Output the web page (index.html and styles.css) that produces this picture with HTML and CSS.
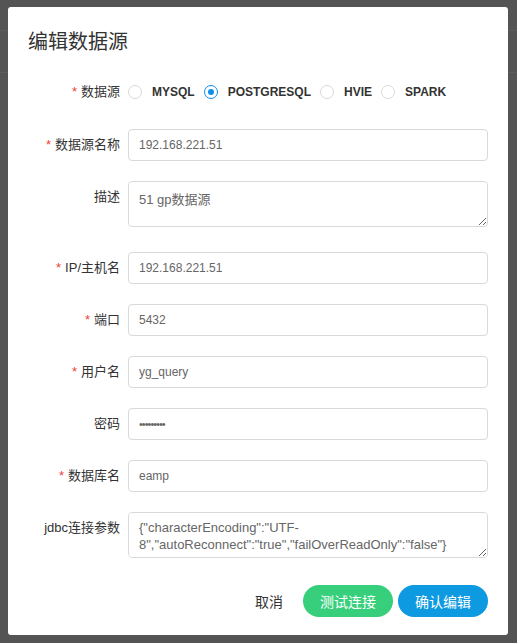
FILE: index.html
```html
<!DOCTYPE html>
<html lang="zh">
<head>
<meta charset="utf-8">
<title>编辑数据源</title>
<link rel="stylesheet" href="styles.css">
</head>
<body>
<div class="modal">
  <h2 class="title">编辑数据源</h2>
  <form class="form">
    <div class="row">
      <label class="lbl req">数据源</label>
      <div class="ctrl radios">
        <label class="radio"><span class="dot"></span><span class="rtext">MYSQL</span></label>
        <label class="radio checked"><span class="dot"></span><span class="rtext">POSTGRESQL</span></label>
        <label class="radio"><span class="dot"></span><span class="rtext">HVIE</span></label>
        <label class="radio"><span class="dot"></span><span class="rtext">SPARK</span></label>
      </div>
    </div>
    <div class="row">
      <label class="lbl req">数据源名称</label>
      <div class="ctrl"><input class="inp" type="text" value="192.168.221.51"></div>
    </div>
    <div class="row row-ta">
      <label class="lbl">描述</label>
      <div class="ctrl"><textarea class="ta ta-desc">51 gp数据源</textarea></div>
    </div>
    <div class="row">
      <label class="lbl req">IP/主机名</label>
      <div class="ctrl"><input class="inp" type="text" value="192.168.221.51"></div>
    </div>
    <div class="row">
      <label class="lbl req">端口</label>
      <div class="ctrl"><input class="inp" type="text" value="5432"></div>
    </div>
    <div class="row">
      <label class="lbl req">用户名</label>
      <div class="ctrl"><input class="inp" type="text" value="yg_query"></div>
    </div>
    <div class="row">
      <label class="lbl">密码</label>
      <div class="ctrl"><input class="inp pwd" type="password" value="123456789"></div>
    </div>
    <div class="row">
      <label class="lbl req">数据库名</label>
      <div class="ctrl"><input class="inp" type="text" value="eamp"></div>
    </div>
    <div class="row row-last">
      <label class="lbl">jdbc连接参数</label>
      <div class="ctrl"><textarea class="ta">{"characterEncoding":"UTF-8","autoReconnect":"true","failOverReadOnly":"false"}</textarea></div>
    </div>
  </form>
  <div class="footer">
    <button class="btn btn-text" type="button">取消</button>
    <button class="btn btn-green" type="button">测试连接</button>
    <button class="btn btn-blue" type="button">确认编辑</button>
  </div>
</div>
</body>
</html>
```
FILE: styles.css
```css
html, body {
  margin: 0;
  padding: 0;
}
body {
  background-color: #545454;
  background-image:
    linear-gradient(#5c5c5c, #5c5c5c),
    linear-gradient(#5c5c5c, #5c5c5c);
  background-repeat: no-repeat;
  background-size: 100% 1px, 100% 1px;
  background-position: 0 30px, 0 72px;
  width: 517px;
  height: 643px;
  font-family: "Liberation Sans", "Noto Sans CJK SC", sans-serif;
  color: #333;
  overflow: hidden;
}
.modal {
  box-sizing: border-box;
  width: 500px;
  height: 628px;
  margin: 7px 0 0 8px;
  background: #fff;
  border-radius: 3px;
  padding: 20px 20px 0 20px;
}
.title {
  margin: 0;
  font-size: 20px;
  line-height: 28px;
  font-weight: normal;
  color: #333;
  font-family: "Noto Sans CJK SC", sans-serif;
}
.form {
  margin-top: 21px;
}
.row {
  display: flex;
  align-items: flex-start;
  margin-bottom: 20px;
}
.row:first-child {
  margin-bottom: 21px;
}
.row-ta {
  margin-bottom: 25px;
}
.row-last {
  margin-bottom: 0;
}
.lbl {
  box-sizing: border-box;
  width: 100px;
  flex: none;
  padding-right: 8px;
  text-align: right;
  font-size: 13px;
  line-height: 32px;
  color: #333;
  white-space: nowrap;
}
.req::before {
  content: "*";
  color: #f04134;
  margin-right: 4px;
  font-family: "Liberation Sans", sans-serif;
}
.ctrl {
  flex: 1;
  min-width: 0;
}
.inp, .ta {
  box-sizing: border-box;
  display: block;
  width: 100%;
  border: 1px solid #d9d9d9;
  border-radius: 4px;
  background: #fff;
  color: #666;
  font-family: "Liberation Sans", "Noto Sans CJK SC", sans-serif;
  outline: none;
  margin: 0;
}
.inp {
  height: 32px;
  padding: 0 10px;
  font-size: 12px;
}
.pwd {
  letter-spacing: -1px;
  font-size: 11px;
}
.ta {
  height: 46px;
  padding: 6px 10px;
  font-size: 13px;
  line-height: 17px;
  resize: vertical;
}
.ta-desc {
  padding-top: 9px;
}
.radios {
  display: flex;
  align-items: center;
  height: 32px;
}
.radio {
  display: flex;
  align-items: center;
  margin-right: 9px;
}
.dot {
  box-sizing: border-box;
  width: 14px;
  height: 14px;
  border: 1px solid #d9d9d9;
  border-radius: 50%;
  background: #fff;
  position: relative;
  flex: none;
}
.checked .dot {
  border-color: #108ee9;
}
.checked .dot::after {
  content: "";
  position: absolute;
  left: 3px;
  top: 3px;
  width: 6px;
  height: 6px;
  border-radius: 50%;
  background: #108ee9;
}
.rtext {
  margin-left: 10px;
  font-size: 12px;
  font-weight: bold;
  color: #333;
}
.footer {
  display: flex;
  justify-content: flex-end;
  gap: 5px;
  margin-top: 27px;
}
.btn {
  height: 32px;
  border: none;
  border-radius: 16px;
  padding: 0 17px;
  font-size: 14px;
  font-family: "Noto Sans CJK SC", sans-serif;
  cursor: pointer;
  line-height: 32px;
}
.btn-text {
  background: transparent;
  color: #333;
  padding: 0 15px;
}
.btn-green {
  background: #37cf7b;
  color: #fff;
}
.btn-blue {
  background: #0e9ae0;
  color: #fff;
}
```
